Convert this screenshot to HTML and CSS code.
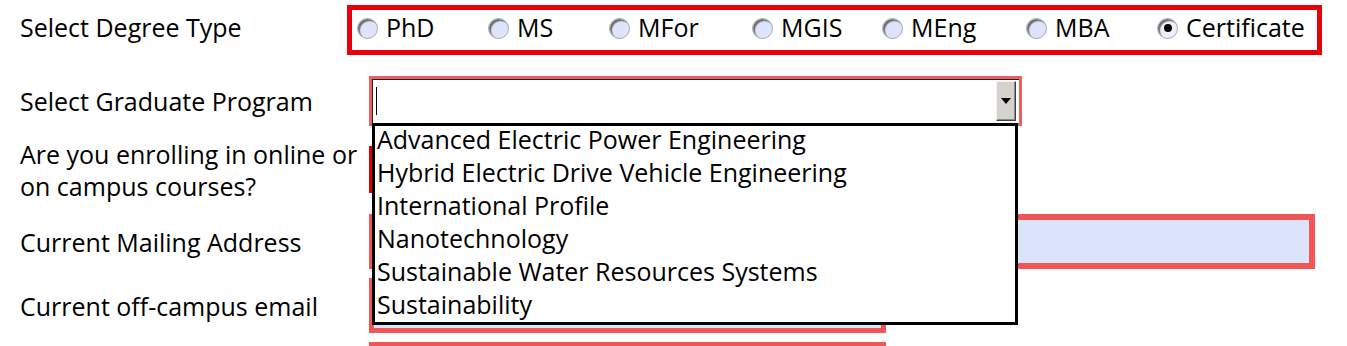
FILE: index.html
```html
<!DOCTYPE html>
<html lang="en">
  <head>
    <meta charset="UTF-8" />
    <meta name="viewport" content="width=device-width, initial-scale=1.0" />
    <title>Graduate Enrollment Form</title>
    <link rel="stylesheet" href="styles.css">
  </head>
  <body>
    <div class="form">
      <div class="row row-degree">
        <div class="label">Select Degree Type</div>
        <div class="degree-box">
          <label class="option"><span class="radio"></span>PhD</label>
          <label class="option"><span class="radio"></span>MS</label>
          <label class="option"><span class="radio"></span>MFor</label>
          <label class="option"><span class="radio"></span>MGIS</label>
          <label class="option"><span class="radio"></span>MEng</label>
          <label class="option"><span class="radio"></span>MBA</label>
          <label class="option"><span class="radio checked"></span>Certificate</label>
        </div>
      </div>

      <div class="row row-program">
        <div class="label">Select Graduate Program</div>
        <div class="combo">
          <span class="caret"></span>
          <span class="combo-button">
            <svg width="10" height="6" viewBox="0 0 10 6"><path d="M0 0h10L5 6z" fill="#000" /></svg>
          </span>
          <ul class="combo-list">
            <li>Advanced Electric Power Engineering</li>
            <li>Hybrid Electric Drive Vehicle Engineering</li>
            <li>International Profile</li>
            <li>Nanotechnology</li>
            <li>Sustainable Water Resources Systems</li>
            <li>Sustainability</li>
          </ul>
        </div>
      </div>

      <div class="row row-mode">
        <div class="label">Are you enrolling in online or<br />on campus courses?</div>
        <div class="field field-mode"></div>
      </div>

      <div class="row row-address">
        <div class="label">Current Mailing Address</div>
        <div class="field field-address"></div>
      </div>

      <div class="row row-email">
        <div class="label">Current off-campus email</div>
        <div class="field field-email"></div>
      </div>

      <div class="row row-next">
        <div class="label"></div>
        <div class="field field-email"></div>
      </div>
    </div>
  </body>
</html>
```

FILE: styles.css
```css
body {
  font-family: "Open Sans", Lato, sans-serif;
  font-size: 25px;
  color: #000;
  background-color: white;
  margin: 0;
  padding: 0;
  overflow: hidden;
}

.row {
  display: flex;
  align-items: center;
}

.label {
  width: 347px;
  flex-shrink: 0;
  box-sizing: border-box;
  padding-left: 20px;
  line-height: 32px;
  white-space: nowrap;
}

.row-degree {
  margin-top: 5px;
  height: 50px;
}

.row-degree .label {
  padding-bottom: 7px;
}

.row-program {
  margin-top: 21px;
  height: 50px;
}

.row-mode {
  margin-top: 20px;
  height: 47px;
}

.row-address {
  margin-top: 21px;
  height: 55px;
}

.row-email,
.row-next {
  margin-top: 9px;
  height: 55px;
}

/* degree radio group */
.degree-box {
  width: 975px;
  height: 50px;
  box-sizing: border-box;
  border: 5px solid #e8000a;
  padding-left: 5px;
  padding-bottom: 6px;
  display: grid;
  grid-template-columns: 131px 121px 143px 130px 144px 131px auto;
  align-items: center;
}

.option {
  display: flex;
  align-items: center;
  gap: 8px;
}

.radio {
  width: 21px;
  height: 21px;
  box-sizing: border-box;
  border-radius: 50%;
  border: 1px solid #a8a8a8;
  background-color: #dde4fb;
  box-shadow: inset 2px 2px 1px #707070;
  display: flex;
  align-items: center;
  justify-content: center;
  position: relative;
  top: 1px;
}

.radio.checked {
  background-color: #eceff9;
}

.radio.checked::after {
  content: "";
  width: 8px;
  height: 8px;
  border-radius: 50%;
  background-color: #000;
}

/* graduate program combo box */
.combo {
  position: relative;
  margin-left: 22px;
  width: 653px;
  height: 50px;
  box-sizing: border-box;
  border: 3px solid #ee5f5f;
  box-shadow: inset 1px 1px 0 #222;
  display: flex;
  align-items: center;
  justify-content: space-between;
  padding-left: 4px;
  padding-right: 3px;
}

.caret {
  width: 1px;
  height: 28px;
  background-color: #000;
}

.combo-button {
  width: 20px;
  height: 40px;
  box-sizing: border-box;
  background-color: #d6d3ce;
  border: 1px solid;
  border-color: #f4f4f4 #404040 #404040 #f4f4f4;
  box-shadow: inset -1px -1px 0 #8a8a8a;
  display: flex;
  align-items: center;
  justify-content: center;
}

.combo-list {
  position: absolute;
  top: 44px;
  left: 0;
  z-index: 10;
  width: 646px;
  height: 202px;
  box-sizing: border-box;
  margin: 0;
  padding: 0 0 0 2px;
  list-style: none;
  background-color: white;
  border: 3px solid #000;
}

.combo-list li {
  line-height: 33px;
  white-space: nowrap;
  position: relative;
  top: -3px;
}

/* text fields behind the list */
.field {
  margin-left: 22px;
  box-sizing: border-box;
}

.field-mode {
  width: 400px;
  height: 47px;
  border: 4px solid #dd0000;
}

.field-address {
  width: 946px;
  height: 55px;
  border: 6px solid #f25555;
  background-color: #dce4fc;
}

.field-email {
  width: 517px;
  height: 55px;
  border: 5px solid #f25555;
  background-color: #dce4fc;
}
```
